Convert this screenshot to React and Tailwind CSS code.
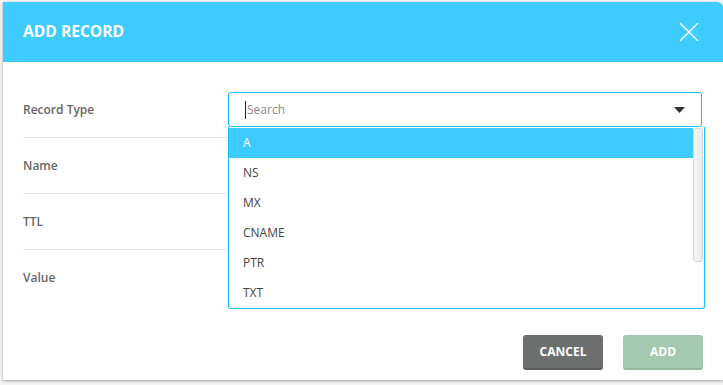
import React from 'react';

const TYPES = ['A', 'NS', 'MX', 'CNAME', 'PTR', 'TXT'];

export default function App() {
  const rows = ['Record Type', 'Name', 'TTL', 'Value'];

  return (
    <div
      className="w-[723px] h-[385px] bg-[#f3f3f3] pl-[3px] pt-[2px] overflow-hidden"
      style={{ fontFamily: '"Open Sans", "Noto Sans", sans-serif' }}
    >
      <div className="relative w-[720px] h-[378px] bg-white rounded-tr-[6px] shadow-[0_1px_3px_rgba(0,0,0,0.35)] flex flex-col">
        {/* header */}
        <div className="h-[60px] bg-[#3ecbff] rounded-tr-[6px] flex items-center justify-between pl-[20px] pr-[24px]">
          <h2 className="text-white font-bold text-[15.6px] leading-none">ADD RECORD</h2>
          <svg width="20" height="20" viewBox="0 0 20 20">
            <path d="M1 1 L19 19 M19 1 L1 19" stroke="#fff" strokeWidth="1.4" fill="none" />
          </svg>
        </div>

        {/* body */}
        <div className="relative flex-1 pt-[20px] pl-[20px] pr-[21px]">
          {rows.map((label, i) => (
            <div
              key={label}
              className={`h-[56px] flex items-center ${i < 3 ? 'border-b border-[#e6e6e6]' : ''}`}
            >
              <span className="w-[205px] text-[12px] text-[#666] font-semibold">{label}</span>
              <div
                className={`flex-1 h-[35px] rounded-[3px] flex items-center pl-[16px] pr-[16px] ${
                  i === 0 ? 'border border-[#11bdf5]' : 'border border-[#dcdcdc]'
                }`}
              >
                {i === 0 && (
                  <>
                    <span className="w-px h-[18px] bg-[#222] mr-[1px]" />
                    <span className="flex-1 text-[12px] text-[#888]">Search</span>
                    <svg width="11" height="6" viewBox="0 0 11 6">
                      <path d="M0 0 H11 L5.5 6 Z" fill="#333" />
                    </svg>
                  </>
                )}
              </div>
            </div>
          ))}

          {/* dropdown list */}
          <div className="absolute left-[225px] top-[65px] w-[477px] h-[182px] bg-white border border-[#11bdf5] border-t-0 rounded-b-[3px] flex">
            <ul className="flex-1 pt-px">
              {TYPES.map((t, i) => (
                <li
                  key={t}
                  className={`h-[30px] flex items-center pl-[14px] text-[12px] ${
                    i === 0 ? 'bg-[#3ecbff] text-white' : 'text-[#444]'
                  }`}
                >
                  {t}
                </li>
              ))}
            </ul>
            <div className="w-[10px] mr-px pt-px">
              <div className="h-[134px] rounded-[3px] border border-[#d4d4d4] bg-gradient-to-r from-[#f7f7f7] to-[#e9e9e9]" />
            </div>
          </div>
        </div>

        {/* footer */}
        <div className="flex justify-end gap-[20px] pr-[20px] pb-[10px]">
          <button className="w-[80px] h-[35px] rounded-[3px] bg-[#6d6f6e] border-b-2 border-[#5a5c5b] text-white font-bold text-[12px]">
            CANCEL
          </button>
          <button className="w-[80px] h-[35px] rounded-[3px] bg-[#a4c9b0] border-b-2 border-[#94b9a0] text-white font-bold text-[12px]">
            ADD
          </button>
        </div>
      </div>
    </div>
  );
}
